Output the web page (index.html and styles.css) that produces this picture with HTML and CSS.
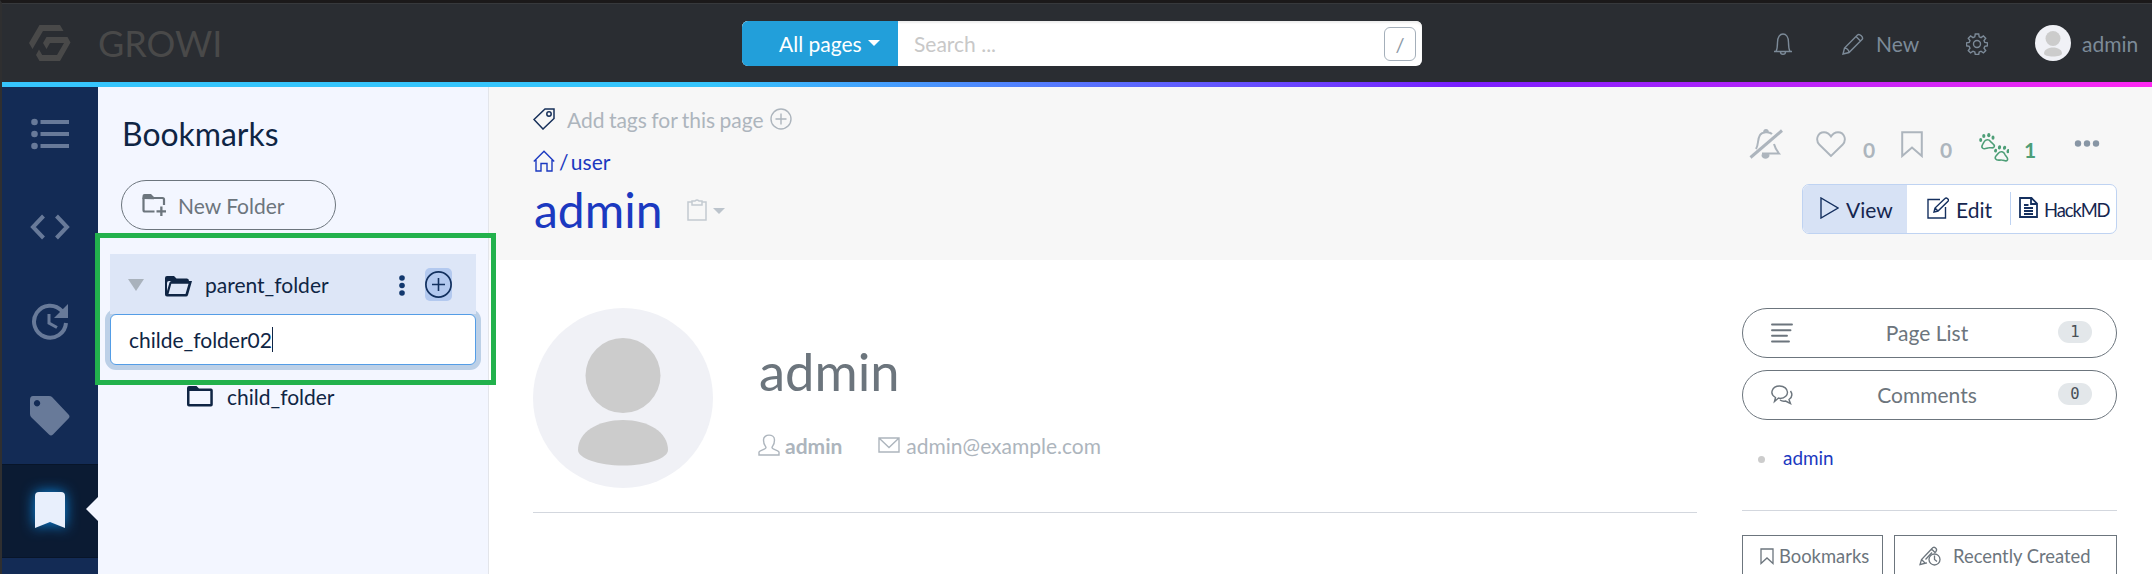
FILE: index.html
```html
<!DOCTYPE html>
<html lang="en">
<head>
<meta charset="utf-8">
<title>admin - GROWI</title>
<link rel="stylesheet" href="styles.css">
</head>
<body>
<div class="app">
  <header class="navbar">
    <svg class="logo" width="42" height="36" viewBox="0 0 42 36"><path d="M10.500 0H31l3.500 6H14L3.500 24 0 18zM17.500 12H38.500l3 5.500L31 36H10.500L7 30l3-5.500 3.200 5.500H28l7-12H21l-3.500 6-3.500-6z"/></svg>
    <span class="brand">GROWI</span>
    <div class="search">
      <button class="scope">All pages <i class="caret"></i></button>
      <span class="placeholder">Search ...</span>
      <kbd class="slash">/</kbd>
    </div>
    <nav class="top-nav">
      <svg class="ico bell" width="20" height="22" viewBox="0 0 20 22"><path d="M1 18.500h18M3 18.500c1-2 1.500-4 1.500-9C4.500 4 7 1 10 1s5.500 3 5.500 8.500c0 5 .5 7 1.500 9M7.500 19c0 3 5 3 5 0"/></svg>
      <svg class="ico pencil" width="22" height="22" viewBox="0 0 22 22"><path d="M1 21l1.500-6L15.500 2c2-2 6.500 2.500 4.500 4.500L7 19.500zM14 3.500l4.500 4.500M2.500 15c2 0 4.500 2 4.500 4.500"/></svg>
      <span class="new">New</span>
      <svg class="ico gear" width="22" height="22" viewBox="0 0 22 22"><circle cx="11" cy="11" r="3.500"/><path d="M9.300 1h3.400l.5 2.800 1.800.8 2.400-1.700 2.300 2.300L18 7.500l.8 1.900 2.700.4v3l-2.700.6-.8 1.800 1.700 2.400-2.300 2.300-2.400-1.700-1.800.8-.5 2.500H9.300l-.5-2.500-1.800-.8-2.400 1.700-2.300-2.300L4 15.200l-.8-1.800-2.700-.6v-3l2.700-.4L4 7.500 2.300 5.200l2.300-2.300L7 4.600l1.800-.8z"/></svg>
      <svg class="mini-avatar" width="36" height="36" viewBox="0 0 180 180"><circle cx="90" cy="90" r="90" fill="#f0f1f6"/><circle cx="90" cy="67.500" r="37.500" fill="#ccc"/><path d="M45 142c0-18 20-30 45-30s45 12 45 30c0 8-20 15.500-45 15.500S45 150 45 142z" fill="#ccc"/></svg>
      <span class="user">admin</span>
    </nav>
  </header>
  <div class="rainbow"></div>
  <div class="body">
    <nav class="rail">
      <a class="cell"><svg width="38" height="32" viewBox="0 0 38 32"><g fill="#687a99"><circle cx="3.500" cy="4" r="3.300"/><circle cx="3.500" cy="16" r="3.300"/><circle cx="3.500" cy="28" r="3.300"/><path d="M9.500 2H38v4H9.500zM9.500 14H38v4H9.500zM9.500 26H38v4H9.500z"/></g></svg></a>
      <a class="cell code"><svg width="40" height="26" viewBox="0 0 40 26"><path d="M13.500 2L3 13l10.500 11M26.500 2L37 13 26.500 24" fill="none" stroke="#687a99" stroke-width="4"/></svg></a>
      <a class="cell"><svg width="38" height="38" viewBox="0 0 38 38"><path d="M31 8A16 16 0 1 0 35 20" fill="none" stroke="#687a99" stroke-width="4"/><path d="M37 1v14H23z" fill="#687a99"/><path d="M18 11v9l8 4.500" fill="none" stroke="#687a99" stroke-width="3"/></svg></a>
      <a class="cell"><svg width="42" height="42" viewBox="0 0 42 42"><path fill="#687a99" fill-rule="evenodd" d="M4 1h16q2 0 3 1l16.500 17.500q2 2 0 4L24 39.500q-2 2-4 0L2.500 22.500Q1 21 1 19V5q0-4 3-4zM8 5a3.200 3.200 0 1 0 .1 0z"/></svg></a>
      <a class="cell active"><svg width="30" height="36" viewBox="0 0 30 36"><path d="M4 0h22q4 0 4 4v32l-15-6-15 6V4q0-4 4-4z" fill="#e8effc"/></svg></a>
      <a class="cell"></a>
    </nav>
    <aside class="panel">
      <h3 class="panel-title">Bookmarks</h3>
      <button class="new-folder">
        <svg width="24" height="22" viewBox="0 0 24 22"><path d="M12.500 17.500H3q-1.500 0-1.500-1.500V3.500M22 11V5.500Q22 4 20.500 4H11" fill="none" stroke="#6c757d" stroke-width="2.200"/><path d="M.5 5V2Q.5 0 2.500 0H9l3 3v2.200zM18.200 12.500h2.300v3.800H24v2.300h-3.500V22h-2.300v-3.400h-3.700v-2.300h3.700z" fill="#6c757d"/></svg>
        <span>New Folder</span>
      </button>
      <div class="folder-row">
        <i class="toggle"></i>
        <svg class="folder" width="27" height="21" viewBox="0 0 27 21"><path fill-rule="evenodd" fill="#0f2544" d="M2 0h7l2.500 2.500H22q2 0 2 2.500H27l-4 14q-.5 1.500-2 1.500H2q-2 0-2-2V2Q0 0 2 0zM2 7v8L4.500 6.500Q5 5 6.500 5H22V5H4Q2 5 2 7zM6.300 7.700L3.500 18H20.500L23.500 7.700z"/></svg>
        <span class="name">parent_folder</span>
        <svg class="dots" width="6" height="21" viewBox="0 0 6 21"><g fill="#12386e"><circle cx="3" cy="3" r="2.800"/><circle cx="3" cy="10.500" r="2.800"/><circle cx="3" cy="18" r="2.800"/></g></svg>
        <span class="add"><svg width="27" height="27" viewBox="0 0 27 27"><path d="M7 13.500h13M13.500 7v13" stroke="#12305e" stroke-width="1.600"/><circle cx="13.500" cy="13.500" r="12.600" fill="none" stroke="#12305e" stroke-width="1.700"/></svg></span>
      </div>
      <div class="field"><span>childe_folder02</span><i class="cursor"></i></div>
      <div class="child-row">
        <svg width="26" height="21" viewBox="0 0 26 21"><path fill-rule="evenodd" fill="#0f2544" d="M2 0h7.500L12 2.500H24q1.800 0 1.800 2V18.500q0 2-1.800 2H2q-2 0-2-2V2Q0 0 2 0zM2.500 5v13H23.300V5z"/></svg>
        <span>child_folder</span>
      </div>
      <div class="callout"></div>
    </aside>
    <main class="content">
      <section class="subnav">
        <div class="page-info">
          <div class="tags">
            <svg width="22" height="22" viewBox="0 0 22 22"><path d="M1 11.500L12 1h9v9.500L10 21z" fill="none" stroke="#17305a" stroke-width="1.500"/><circle cx="16" cy="6" r="2.200" fill="none" stroke="#17305a" stroke-width="1.500"/></svg>
            <span>Add tags for this page</span>
            <svg width="22" height="22" viewBox="0 0 22 22" fill="none" stroke="#adb5bd" stroke-width="1.400"><circle cx="11" cy="11" r="10"/><path d="M5.500 11h11M11 5.500v11"/></svg>
          </div>
          <div class="crumbs">
            <svg width="22" height="22" viewBox="0 0 22 22"><path d="M.8 11.500L11 1.200l10.200 10.300M3 10v11h5v-7.500h6V21h5V10" fill="none" stroke="#1b39c0" stroke-width="1.400"/></svg>
            <span>/ user</span>
          </div>
          <div class="title-row">
            <h1>admin</h1>
            <svg width="20" height="22" viewBox="0 0 20 22"><path d="M5 3H1v18h18V3h-4M5 2h3q2-2 4 0h3v4H5z" fill="none" stroke="#c3cad1" stroke-width="1.500"/></svg>
            <i class="caret light"></i>
          </div>
        </div>
        <div class="controls">
          <div class="reactions">
            <svg class="mute" width="34" height="30" viewBox="0 0 34 30"><g fill="none" stroke="#adb5bd" stroke-width="2"><path d="M7 20c3-5 1-9 4-14 2-3 9-4 12-1M15 4c0-4 4-4 4 0M25 15c1 4 3 7 5 9.500H13"/><path d="M1.500 28.500L33 1.500" stroke-width="3"/></g><path d="M12.500 26c0-2 8-2 8 0 0 5-8 5-8 0z" fill="#adb5bd"/></svg>
            <svg class="heart" width="30" height="27" viewBox="0 0 30 27"><path d="M15 25L3.500 13.800C-1 9 1.500 1.200 8 1.200c3.500 0 5.500 1.800 7 4.300 1.500-2.500 3.500-4.300 7-4.300 6.500 0 9 7.800 4.500 12.600z" fill="none" stroke="#adb5bd" stroke-width="1.900"/></svg>
            <span class="count">0</span>
            <svg class="mark" width="22" height="27" viewBox="0 0 22 27"><path d="M1.200 1.200h19.600V25L11 16.500 1.200 25z" fill="none" stroke="#adb5bd" stroke-width="2"/></svg>
            <span class="count">0</span>
            <svg class="paws" width="30" height="30" viewBox="0 0 30 30"><g id="paw"><path d="M3.500 15c-2-2 .5-3.500 1.500-6 1.500-3 5-3 6.500-.5 1.200 1.700 4.500 2.500 3.800 5-.8 2.500-3 .8-5.500 1.300-2.500.4-4.500 2-6.300.2z" fill="none" stroke="#4d9e77" stroke-width="1.600"/><g fill="#4d9e77"><ellipse cx="1.700" cy="7" rx="1.500" ry="1.900"/><ellipse cx="4.800" cy="3" rx="1.600" ry="2.100"/><ellipse cx="9.800" cy="2.200" rx="1.600" ry="2.100"/><ellipse cx="14" cy="4.700" rx="1.500" ry="2.100"/></g></g><use href="#paw" transform="translate(14.500 12) rotate(13 8 8)"/></svg>
            <span class="count seen">1</span>
            <svg class="more" width="26" height="7" viewBox="0 0 26 7"><g fill="#8896a5"><circle cx="4" cy="3.500" r="3.200"/><circle cx="13" cy="3.500" r="3.200"/><circle cx="22" cy="3.500" r="3.200"/></g></svg>
          </div>
          <div class="modes">
            <span class="mode view"><svg width="19" height="22" viewBox="0 0 19 22"><path d="M1 1v20l17-10z"/></svg>View</span>
            <span class="mode edit"><svg width="22" height="22" viewBox="0 0 22 22"><path d="M13 2.500H1V21h17.500V10M7 15l1-4L18 1.500c1.500-1.500 4.500 1 3 2.800L11 14zM8 11l3 3"/></svg>Edit</span>
            <span class="mode hack"><svg width="19" height="21" viewBox="0 0 19 21"><path d="M1 1h11.500L18 6.500V20H1zM12 1v6h6M5 8h4.500M5 11h9M5 14h9M5 17h9" stroke-width="1.800"/></svg>HackMD</span>
          </div>
        </div>
      </section>
      <section class="page">
        <article class="profile">
          <div class="profile-head">
            <svg width="180" height="180" viewBox="0 0 180 180"><circle cx="90" cy="90" r="90" fill="#f0f1f6"/><circle cx="90" cy="67.500" r="37.500" fill="#ccc"/><path d="M45 142c0-18 20-30 45-30s45 12 45 30c0 8-20 15.500-45 15.500S45 150 45 142z" fill="#ccc"/></svg>
            <div class="who">
              <h2>admin</h2>
              <div class="meta">
                <svg width="22" height="22" viewBox="0 0 22 22"><path d="M1 21v-3c1-2 7-2.500 7-4.500 0-1.500-2.500-2-2.500-7.500 0-6.500 11-6.500 11 0 0 5.500-2.500 6-2.500 7.500 0 2 6 2.500 7 4.500v3z"/></svg>
                <b>admin</b>
                <svg class="mail" width="22" height="16" viewBox="0 0 22 16"><path d="M1 1h20v14H1zM1 1l10 9.500L21 1"/></svg>
                <span>admin@example.com</span>
              </div>
            </div>
          </div>
          <hr>
        </article>
        <aside class="side">
          <button class="pill"><svg width="22" height="20" viewBox="0 0 22 20"><path d="M1 1.500h20M1 7.200h18.500M1 12.800h15M1 18.500h17" stroke-width="1.900" stroke-linecap="round"/></svg><span>Page List</span><em>1</em></button>
          <button class="pill"><svg width="22" height="20" viewBox="0 0 22 20"><path d="M3.500 16.500l1-4C-2 9 1 1 8.500 1c10 0 11 12 .5 12.500L7.500 13zM19.500 6c2 3 2 6-1.500 8.500l1.500 4-5-2.500c-2 .5-4 0-5.500-1" stroke-width="1.400"/></svg><span>Comments</span><em>0</em></button>
          <ul class="toc"><li>admin</li></ul>
          <hr>
          <div class="tabs">
            <span class="tab marks"><svg width="14" height="17" viewBox="0 0 14 17"><path d="M1 1h12v14.500L7 10l-6 5.500z"/></svg>Bookmarks</span>
            <span class="tab recent"><svg width="22" height="20" viewBox="0 0 22 20"><path d="M8 16.800L1 18.500l1.500-5L13 2.500c1.500-3 6 0 4 3l-1.500 1.500M2.500 13.500L6 17M12.500 3L16 6.500M6.500 13.500L13 6.500"/><circle cx="15.500" cy="13.500" r="5.500"/><path d="M15.500 9.500v4l2.500 2"/></svg>Recently Created</span>
          </div>
        </aside>
      </section>
    </main>
  </div>
</div>
</body>
</html>
```
FILE: styles.css
```css
* { box-sizing: border-box; }
body { margin: 0; font-family: Lato, "Liberation Sans", sans-serif; font-size: 21px; line-height: 30px; color: #0f2544; }
svg { display: block; flex: none; }
h1, h2, h3 { margin: 0; font-weight: 400; }
button { font: inherit; background: none; padding: 0; border: 0; }
hr { margin: 0; border: 0; border-top: 1px solid #d3d7de; }
span, b, h1, h2, h3 { white-space: nowrap; }

.app { width: 2152px; height: 574px; overflow: hidden; border-top: 3px solid #1b191a; border-left: 2px solid #2f2f30; background: #fff; }
.navbar { display: flex; height: 79px; background: #2a2d32; border-top: 1px solid #37393c; }
.logo { margin: 21px 0 0 27px; fill: #494949; }
.brand { margin: 17px 0 0 27px; width: 150px; font-size: 36px; line-height: 44px; color: #494949; }
.search { display: flex; align-items: center; width: 680px; height: 45px; margin: 17px 0 0 494px; border-radius: 6px; overflow: hidden; background: #fff; box-shadow: inset 0 2px 2px #eee; }
.scope { display: flex; width: 156px; height: 45px; padding: 8px 0 0 37px; background: #229fda; color: #fff; line-height: 30px; text-align: left; }
.caret { width: 0; height: 0; margin: 11px 0 0 6px; border: 6px solid transparent; border-top-color: #fff; border-bottom: 0; }
.placeholder { margin: 0 0 0 16px; width: 330px; color: #c8c8c8; }
.slash { width: 32px; height: 34px; margin-left: auto; margin-right: 6px; border: 1px solid #a4afba; border-radius: 6px; font: 20px/32px Lato, sans-serif; color: #8b98a5; text-align: center; }
.top-nav { display: flex; flex: 1; color: #7c8a98; line-height: 30px; }
.ico { fill: none; stroke: #7c8a98; stroke-width: 1.400; margin-top: 29px; }
.bell { margin-left: 351px; }
.pencil { margin-left: 49px; }
.new { margin: 25px 0 0 12px; width: 43px; }
.gear { margin-left: 47px; }
.mini-avatar { margin: 21px 0 0 47px; }
.user { margin: 25px 0 0 11px; }
.rainbow { height: 5px; background: linear-gradient(90deg, #36c5fc 0, #36c5fc 33%, #7a1fff 68%, #ff29f3 100%); }

.body { display: flex; height: 487px; }
.rail { width: 96px; padding-top: 1px; background: #132b55; flex: none; }
.cell { display: flex; height: 94px; align-items: center; justify-content: center; position: relative; padding-bottom: 3px; }
.rail .code { padding-bottom: 5px; }
.rail .cell:last-child { height: 22px; }
.cell.active { background: #0b1b33; border-top: 1px solid #081529; border-bottom: 1px solid #081529; padding-bottom: 2px; }
.cell.active svg { filter: drop-shadow(0 0 7px #0b8be6); }
.cell.active::after { content: ""; position: absolute; right: 0; top: 32px; border: 12px solid transparent; border-right-color: #f3f6ff; border-left: 0; }
.panel { position: relative; width: 391px; flex: none; background: #f3f6ff; border-right: 1px solid #e3e5ea; }
.panel-title { padding: 27px 0 0 24px; font-size: 31.900px; line-height: 40px; }
.new-folder { display: flex; width: 215px; height: 50px; margin: 26px 0 24px 23px; padding-left: 20px; align-items: center; border: 1px solid #6c757d; border-radius: 25px; color: #6c757d; }
.new-folder span { margin: 1px 0 0 12px; }
.folder-row { position: relative; z-index: 1; display: flex; align-items: center; width: 366px; height: 60px; margin-left: 12px; padding-left: 18px; background: #dde6f7; }
.toggle { border: 8px solid transparent; border-top: 12px solid #a9b2bc; border-bottom: 0; margin-top: 2px; }
.folder { margin: 4px 0 0 21px; }
.name { margin: 2px 0 0 13px; width: 130px; }
.dots { margin: 2px 0 0 64px; }
.add { display: flex; align-items: center; width: 27px; height: 33px; margin: 1px 0 0 20px; background: #b3c9ef; border-radius: 5px; }
.field { display: flex; align-items: center; width: 366px; height: 51px; margin-left: 12px; padding-left: 18px; background: #fff; border: 1px solid #549de6; border-radius: 6px; box-shadow: 0 0 0 5px #bcd0e7; }
.field span { padding-top: 1px; }
.cursor { width: 1px; height: 25px; background: #0f2544; }
.child-row { display: flex; align-items: center; margin: 15px 0 0 89px; height: 32px; }
.child-row span { margin: 1px 0 0 14px; }
.callout { position: absolute; z-index: 2; left: -3px; top: 146px; width: 401px; height: 152px; border: 5px solid #22b14c; }

.content { flex: 1; min-width: 0; }
.subnav { display: flex; justify-content: space-between; height: 173px; background: #f7f7f7; padding: 0 35px 0 44px; }
.page-info { padding-top: 17px; }
.tags { display: flex; align-items: center; gap: 12px; height: 30px; color: #adb5bd; }
.tags span { margin: 1px -6px 0 0; word-spacing: -1px; }
.crumbs { display: flex; align-items: center; gap: 4px; height: 30px; margin-top: 12px; color: #1b39c0; }
.crumbs span { margin-top: 2px; word-spacing: -3px; }
.title-row { display: flex; align-items: center; height: 60px; margin-top: 4px; }
.title-row h1 { font-size: 48px; line-height: 60px; color: #1b39c0; margin: 0 24px 0 1px; }
.caret.light { margin: 2px 0 0 6px; border-top-color: #bcc4cc; }
.controls { width: 368px; }
.reactions { display: flex; height: 97px; }
.mute { margin-top: 42px; }
.heart { margin: 44px 0 0 33px; }
.count { width: 12px; margin: 48px 0 0 17px; font-weight: 700; color: #adb5bd; }
.mark { margin: 44px 0 0 26px; }
.paws { margin: 46px 0 0 27px; }
.seen { color: #4d9e77; margin-left: 15px; }
.more { margin: 53px 0 0 38px; }
.modes { display: flex; width: 315px; height: 50px; margin-left: 53px; border: 1px solid #bfd3f2; border-radius: 7px; overflow: hidden; background: #fff; color: #15264f; }
.mode { display: flex; align-items: center; position: relative; padding-top: 1px; }
.mode svg { fill: none; stroke: #15305f; stroke-width: 1.400; margin-top: -4px; }
.view { width: 104px; padding-left: 17px; gap: 7px; background: #d7e2f5; }
.edit { width: 104px; padding-left: 20px; gap: 7px; }
.hack { padding-left: 8px; gap: 6px; font-size: 18.400px; letter-spacing: -1.100px; }
.hack::before { content: ""; position: absolute; left: -1px; top: 7px; width: 1px; height: 33px; background: #bfd3f2; }

.page { display: flex; justify-content: space-between; padding: 48px 35px 0 44px; }
.profile { width: 1164px; }
.profile hr { margin-top: 24px; }
.profile-head { display: flex; }
.who { margin-left: 45px; }
.who h2 { margin: 31px 0 0 1px; font-size: 52.500px; line-height: 64px; color: #6c757d; }
.meta { display: flex; align-items: center; height: 30px; margin-top: 28px; color: #adb5bd; }
.meta svg { fill: none; stroke: #adb5bd; stroke-width: 1.400; margin-top: -3px; }
.meta b { margin: 0 36px 0 5px; }
.meta span { margin-left: 6px; }
.side { width: 375px; }
.pill { display: flex; align-items: center; width: 375px; height: 50px; margin-bottom: 12px; padding: 0 24px 0 28px; border: 1px solid #6c757d; border-radius: 25px; color: #6c757d; }
.pill svg { fill: none; stroke: #6c757d; }
.pill span { flex: 1; padding: 0 0 0 3px; text-align: center; }
.pill em { width: 34px; height: 22px; margin-top: -3px; border-radius: 11px; background: #e3e7ea; color: #495057; font: 15.500px/23px "DejaVu Sans Mono", monospace; text-align: center; }
.toc { margin: 23px 0 0; padding: 0 0 0 41px; list-style: none; color: #1b39c0; font-size: 18.900px; }
.toc li { height: 30px; display: flex; align-items: center; }
.toc li::before { content: ""; width: 7px; height: 7px; margin: 2px 18px 0 -25px; border-radius: 50%; background: #ccc; }
.side hr { margin-top: 37px; }
.tabs { display: flex; gap: 11px; margin-top: 24px; }
.tab { display: flex; align-items: center; height: 50px; padding-bottom: 8px; border: 1px solid #6c757d; color: #6c757d; font-size: 18.400px; }
.tab svg { fill: none; stroke: #6c757d; stroke-width: 1.300; }
.marks { width: 141px; padding-left: 17px; gap: 5px; }
.recent { width: 223px; padding-left: 24px; gap: 12px; }
```
